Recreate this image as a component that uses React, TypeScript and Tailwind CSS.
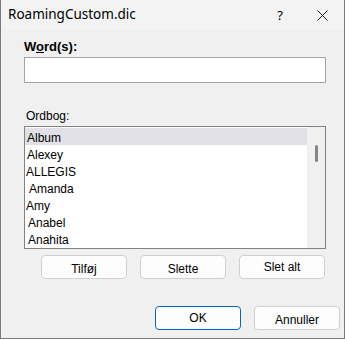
const words = [
  { w: 'Album', pl: 'pl-[2px]' },
  { w: 'Alexey', pl: 'pl-[2px]' },
  { w: 'ALLEGIS', pl: 'pl-[1px]' },
  { w: 'Amanda', pl: 'pl-[4px]' },
  { w: 'Amy', pl: 'pl-[1px]' },
  { w: 'Anabel', pl: 'pl-[3px]' },
  { w: 'Anahita', pl: 'pl-[3px]' },
];

function DlgButton({ label, primary = false, className = '' }: { label: string; primary?: boolean; className?: string }) {
  return (
    <button
      className={
        'w-[86px] h-[24px] rounded-[4px] border bg-[#fdfdfd] text-[12px] text-black ' +
        (primary ? 'border-[#0067c0] ' : 'border-[#d0d0d0] ') +
        className
      }
    >
      {label}
    </button>
  );
}

export default function App() {
  return (
    <div
      className="w-[345px] h-[339px] flex flex-col bg-[#f0f0f0] border-x border-b border-[#7a7a7a] text-black"
      style={{ fontFamily: '"Liberation Sans", Arial, sans-serif' }}
    >
      {/* title bar */}
      <div
        className="h-[30px] shrink-0 flex items-center bg-[#f3f3f3] pl-[7px]"
        style={{ fontFamily: '"Noto Sans", "Open Sans", sans-serif' }}
      >
        <span className="text-[13.5px] leading-none">RoamingCustom.dic</span>
        <span className="ml-auto text-[13px] leading-none mr-[34px]">?</span>
        <svg width="11" height="11" viewBox="0 0 11 11" className="mr-[16px]">
          <path d="M0.5 0.5 L10.5 10.5 M10.5 0.5 L0.5 10.5" stroke="#1a1a1a" strokeWidth="1" />
        </svg>
      </div>

      <div className="flex flex-col pl-[23px] pr-[18px]">
        <label className="mt-[9px] text-[13px] font-bold leading-[15px]">
          W<span className="underline">o</span>rd(s):
        </label>
        <input className="mt-[3px] w-[302px] h-[26px] bg-white border border-[#a5a5a5] outline-none" />

        <div className="mt-[26px] text-[12px] leading-[14px] pl-[2px]">Ordbog:</div>

        <div className="mt-[3px] w-[302px] h-[123px] border border-[#828282] bg-white flex">
          <div className="flex-1 flex flex-col pt-[1px] text-[12px]">
            {words.map((it, i) => (
              <div
                key={it.w}
                className={'h-[17px] flex items-center pt-[3px] ' + it.pl + (i === 0 ? ' bg-[#e0e0e6]' : '')}
              >
                {it.w}
              </div>
            ))}
          </div>
          <div className="w-[18px] bg-[#f0f0f0] flex justify-center">
            <div className="mt-[18px] w-[3px] h-[17px] rounded-full bg-[#858585]" />
          </div>
        </div>

        <div className="mt-[6px] flex gap-[13px] pl-[17px]">
          <DlgButton label="Tilføj" className="pt-[3px]" />
          <DlgButton label="Slette" className="pt-[3px]" />
          <DlgButton label="Slet alt" className="pb-[1px]" />
        </div>
      </div>

      <div className="mt-[27px] flex gap-[13px] pl-[154px]">
        <DlgButton label="OK" primary />
        <DlgButton label="Annuller" className="pt-[3px]" />
      </div>
    </div>
  );
}
